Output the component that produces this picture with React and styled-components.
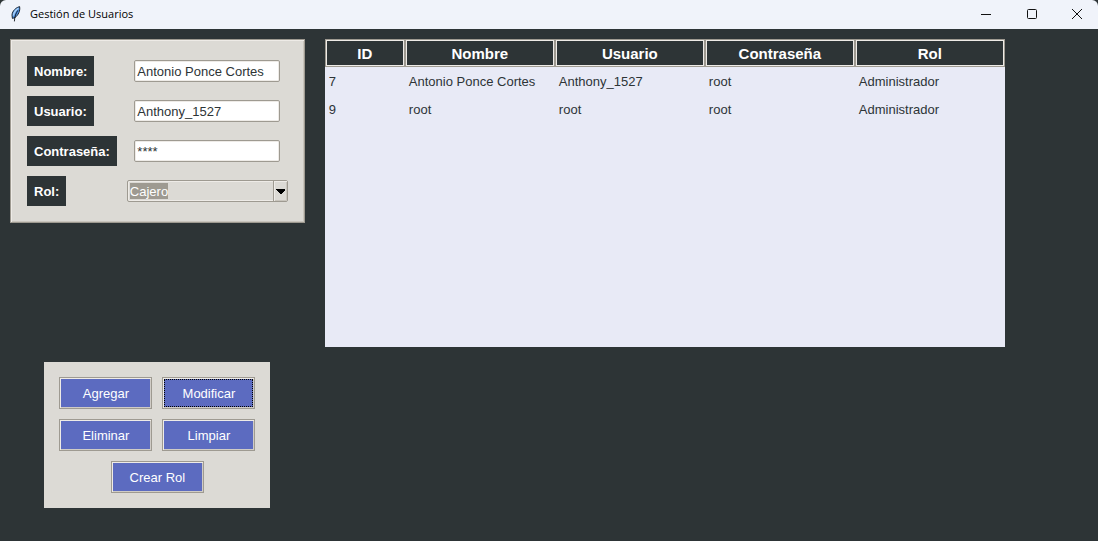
import React, { useState } from 'react';
import styled, { createGlobalStyle } from 'styled-components';

const colors = {
	dark: '#2d3436',
	panel: '#dcdad5',
	edge: '#9e9a91',
	light: '#eeebe7',
	accent: '#5c6bc0',
	list: '#e8eaf6',
};

const columns = [
	{ key: 'id', title: 'ID', width: 80 },
	{ key: 'nombre', title: 'Nombre', width: 150 },
	{ key: 'usuario', title: 'Usuario', width: 150 },
	{ key: 'clave', title: 'Contraseña', width: 150 },
	{ key: 'rol', title: 'Rol', width: 150 },
];

const users = [
	{
		id: 7,
		nombre: 'Antonio Ponce Cortes',
		usuario: 'Anthony_1527',
		clave: 'root',
		rol: 'Administrador',
	},
	{
		id: 9,
		nombre: 'root',
		usuario: 'root',
		clave: 'root',
		rol: 'Administrador',
	},
];

const FeatherIcon = () => (
	<svg width='16' height='16' viewBox='0 0 16 16' aria-hidden='true'>
		<path
			d='M11.6 0.6C8.4 1.4 4.2 4.8 4 9L4.4 12.4L7 11.6C10.4 9 12.4 4.8 11.6 0.6Z'
			fill='#4f93e6'
			stroke='#10151c'
			strokeWidth='0.9'
		/>
		<path d='M10.4 2.2C7.8 4 5.8 6.6 5.4 9.6' stroke='#a9d0f8' strokeWidth='1.5' fill='none' />
		<path d='M9.8 4.4C8 7.4 6.6 10 6.4 15.4' stroke='#10151c' strokeWidth='0.9' fill='none' />
	</svg>
);

const TitleBar = () => (
	<Bar>
		<FeatherIcon />
		<h1>Gestión de Usuarios</h1>
		<WindowButton aria-label='Minimizar'>
			<svg width='10' height='10' viewBox='0 0 10 10'>
				<path d='M0 5.5H10' />
			</svg>
		</WindowButton>
		<WindowButton aria-label='Maximizar'>
			<svg width='10' height='10' viewBox='0 0 10 10'>
				<rect x='0.5' y='0.5' width='9' height='9' rx='1' />
			</svg>
		</WindowButton>
		<WindowButton aria-label='Cerrar'>
			<svg width='10' height='10' viewBox='0 0 10 10'>
				<path d='M0 0L10 10M10 0L0 10' />
			</svg>
		</WindowButton>
	</Bar>
);

const UserForm = () => {
	const [form, setForm] = useState({
		nombre: 'Antonio Ponce Cortes',
		usuario: 'Anthony_1527',
		clave: '****',
		rol: 'Cajero',
	});
	const update = (e) => setForm({ ...form, [e.target.name]: e.target.value });

	return (
		<FormPanel>
			<Label htmlFor='nombre'>Nombre:</Label>
			<TextField id='nombre' name='nombre' value={form.nombre} onChange={update} />
			<Label htmlFor='usuario'>Usuario:</Label>
			<TextField id='usuario' name='usuario' value={form.usuario} onChange={update} />
			<Label htmlFor='clave'>Contraseña:</Label>
			<TextField id='clave' name='clave' value={form.clave} onChange={update} />
			<Label htmlFor='rol'>Rol:</Label>
			<Combo>
				<select id='rol' name='rol' value={form.rol} onChange={update}>
					<option>Cajero</option>
					<option>Administrador</option>
				</select>
				<Arrow>
					<svg width='9' height='5' viewBox='0 0 9 5' shapeRendering='crispEdges'>
						<path d='M0 0H9V1L5 5H4L0 1Z' />
					</svg>
				</Arrow>
			</Combo>
		</FormPanel>
	);
};

const UserTable = () => (
	<TableArea>
		<Table>
			<colgroup>
				{columns.map((c) => (
					<Col key={c.key} $width={c.width} />
				))}
			</colgroup>
			<thead>
				<tr>
					{columns.map((c) => (
						<th key={c.key} scope='col'>
							{c.title}
						</th>
					))}
				</tr>
			</thead>
			<tbody>
				{users.map((user) => (
					<tr key={user.id}>
						{columns.map((c) => (
							<td key={c.key}>{user[c.key]}</td>
						))}
					</tr>
				))}
			</tbody>
		</Table>
	</TableArea>
);

const App = () => (
	<>
		<GlobalStyle />
		<Window>
			<TitleBar />
			<Content>
				<UserForm />
				<UserTable />
				<Actions>
					<ActionButton>Agregar</ActionButton>
					<ActionButton $active>Modificar</ActionButton>
					<ActionButton>Eliminar</ActionButton>
					<ActionButton>Limpiar</ActionButton>
					<ActionButton $wide>Crear Rol</ActionButton>
				</Actions>
			</Content>
		</Window>
	</>
);

const GlobalStyle = createGlobalStyle`
	* {
		margin: 0;
		padding: 0;
		box-sizing: border-box;
	}
	body {
		background: ${colors.dark};
		font-family: 'Liberation Sans', Arial, sans-serif;
		font-size: 13px;
		color: ${colors.dark};
	}
	button, input, select {
		font: inherit;
		color: inherit;
	}
`;

const Window = styled.div`
	min-height: 100vh;
	background: ${colors.dark};
`;

const Bar = styled.header`
	display: flex;
	align-items: center;
	height: 29px;
	padding-bottom: 2px;
	padding-left: 8px;
	background: #f0f3fa;
	border-radius: 6px 6px 0 0;
	h1 {
		flex: 1;
		margin-left: 6px;
		font: 11px 'Open Sans', 'Noto Sans', sans-serif;
		color: #000;
	}
`;

const WindowButton = styled.button`
	display: flex;
	align-items: center;
	justify-content: center;
	width: 46px;
	height: 27px;
	border: none;
	background: none;
	&:last-child {
		width: 43px;
	}
	svg {
		fill: none;
		stroke: #111;
		overflow: visible;
	}
`;

const Content = styled.main`
	display: grid;
	grid-template-columns: max-content max-content;
	column-gap: 20px;
	row-gap: 15px;
	padding: 10px;
`;

const FormPanel = styled.form`
	display: grid;
	grid-template-columns: auto auto;
	gap: 10px;
	align-items: center;
	align-self: start;
	padding: 16px;
	background: ${colors.panel};
	border: 1px solid ${colors.edge};
	box-shadow: inset 1px 1px ${colors.light}, inset -1px -1px #c9c5bd;
`;

const Label = styled.label`
	justify-self: start;
	padding: 1px 7px 0;
	line-height: 29px;
	font-weight: bold;
	color: #fff;
	background: ${colors.dark};
`;

const TextField = styled.input`
	justify-self: center;
	width: 146px;
	height: 22px;
	padding: 0 2px;
	border: 1px solid ${colors.edge};
	border-radius: 2px;
	background: #fff;
	box-shadow: inset 0 0 0 1px ${colors.light};
	outline: none;
`;

const Combo = styled.div`
	position: relative;
	display: flex;
	width: 161px;
	height: 22px;
	border: 1px solid ${colors.edge};
	border-radius: 2px;
	box-shadow: inset 0 0 0 1px ${colors.light};
	select {
		flex: 1;
		appearance: none;
		padding: 0 2px;
		border: none;
		outline: none;
		color: #fff;
		background: linear-gradient(${colors.edge}, ${colors.edge}) 2px 2px / 38px 16px no-repeat;
	}
	option {
		color: ${colors.dark};
	}
`;

const Arrow = styled.span`
	position: absolute;
	top: 0;
	right: 0;
	bottom: 0;
	display: flex;
	align-items: center;
	justify-content: center;
	width: 14px;
	border-left: 1px solid ${colors.edge};
	box-shadow: inset 1px 1px ${colors.light}, inset -1px -1px #c9c5bd;
	pointer-events: none;
`;

const TableArea = styled.section`
	min-height: 308px;
	background: ${colors.list};
`;

const Table = styled.table`
	table-layout: fixed;
	width: 680px;
	border-collapse: separate;
	border-spacing: 0;
	th {
		height: 28px;
		font-size: 15px;
		color: #fff;
		background: ${colors.dark};
		border: 1px solid ${colors.edge};
		box-shadow: inset 0 0 0 1px ${colors.light};
	}
	td {
		height: 28px;
		padding: 0 4px;
	}
`;

const Col = styled.col`
	width: ${(props) => props.$width}px;
`;

const Actions = styled.section`
	display: grid;
	grid-template-columns: 93px 93px;
	gap: 10px;
	justify-self: center;
	padding: 15px;
	background: ${colors.panel};
`;

const ActionButton = styled.button`
	grid-column: ${(props) => (props.$wide ? '1 / -1' : 'auto')};
	justify-self: center;
	width: 93px;
	height: 32px;
	color: #fff;
	background: ${colors.accent};
	border: 1px solid ${colors.edge};
	box-shadow: inset 1px 1px ${colors.light}, inset -1px -1px #d0ccc6;
	outline: ${(props) => (props.$active ? '1px dotted #000' : 'none')};
	outline-offset: -3px;
`;

export default App;
